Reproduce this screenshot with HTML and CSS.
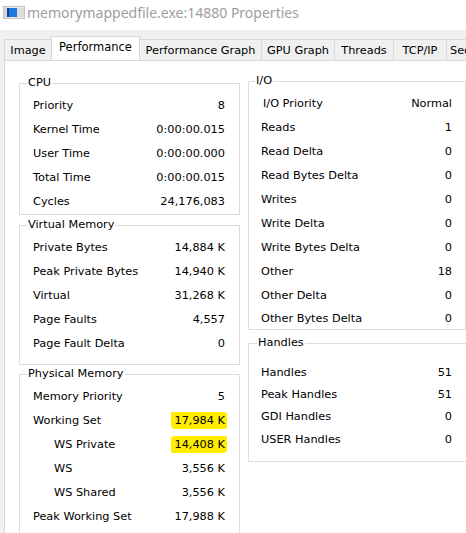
FILE: index.html
```html
<!DOCTYPE html>
<html>
<head>
<meta charset="utf-8">
<title>memorymappedfile.exe:14880 Properties</title>
<link rel="stylesheet" href="styles.css">
</head>
<body>
<div class="window">
  <div class="titlebar">
    <svg class="app-icon" width="22" height="13" viewBox="0 0 22 13">
      <rect x="0.5" y="0.5" width="21" height="12" fill="#ececec" stroke="#c4c4c4"/>
      <rect x="1" y="1" width="3" height="11" fill="#d6d6d6"/>
      <rect x="4" y="2" width="2" height="9" fill="#1b3d8f"/>
      <rect x="6" y="2" width="8" height="9" fill="#1e78e0"/>
      <rect x="14" y="2" width="7" height="9" fill="#dcdcdc"/>
    </svg>
    <span class="title">memorymappedfile.exe:14880 Properties</span>
  </div>

  <div class="tabs">
    <div class="tab t-image">Image</div>
    <div class="tab tab-active t-perf">Performance</div>
    <div class="tab t-graph">Performance Graph</div>
    <div class="tab t-gpu">GPU Graph</div>
    <div class="tab t-threads">Threads</div>
    <div class="tab t-tcp">TCP/IP</div>
    <div class="tab t-sec">Security</div>
  </div>

  <div class="panel">
    <div class="col col-left">
      <div class="group g-cpu">
        <div class="legend">CPU</div>
        <div class="row"><span>Priority</span><span>8</span></div>
        <div class="row"><span>Kernel Time</span><span>0:00:00.015</span></div>
        <div class="row"><span>User Time</span><span>0:00:00.000</span></div>
        <div class="row"><span>Total Time</span><span>0:00:00.015</span></div>
        <div class="row"><span>Cycles</span><span>24,176,083</span></div>
      </div>

      <div class="group g-vm">
        <div class="legend">Virtual Memory</div>
        <div class="row"><span>Private Bytes</span><span>14,884 K</span></div>
        <div class="row"><span>Peak Private Bytes</span><span>14,940 K</span></div>
        <div class="row"><span>Virtual</span><span>31,268 K</span></div>
        <div class="row"><span>Page Faults</span><span>4,557</span></div>
        <div class="row"><span>Page Fault Delta</span><span>0</span></div>
      </div>

      <div class="group g-pm">
        <div class="legend">Physical Memory</div>
        <div class="row"><span>Memory Priority</span><span>5</span></div>
        <div class="row"><span>Working Set</span><span class="hl">17,984 K</span></div>
        <div class="row indent"><span>WS Private</span><span class="hl hl2">14,408 K</span></div>
        <div class="row indent"><span>WS</span><span>3,556 K</span></div>
        <div class="row indent"><span>WS Shared</span><span>3,556 K</span></div>
        <div class="row"><span>Peak Working Set</span><span>17,988 K</span></div>
      </div>
    </div>

    <div class="col col-right">
      <div class="group g-io">
        <div class="legend">I/O</div>
        <div class="row"><span class="io-pri">I/O Priority</span><span>Normal</span></div>
        <div class="row"><span>Reads</span><span>1</span></div>
        <div class="row"><span>Read Delta</span><span>0</span></div>
        <div class="row"><span>Read Bytes Delta</span><span>0</span></div>
        <div class="row"><span>Writes</span><span>0</span></div>
        <div class="row"><span>Write Delta</span><span>0</span></div>
        <div class="row"><span>Write Bytes Delta</span><span>0</span></div>
        <div class="row"><span>Other</span><span>18</span></div>
        <div class="row"><span>Other Delta</span><span>0</span></div>
        <div class="row row-short"><span>Other Bytes Delta</span><span>0</span></div>
      </div>

      <div class="group g-handles">
        <div class="legend">Handles</div>
        <div class="row row-short"><span>Handles</span><span>51</span></div>
        <div class="row row-short"><span>Peak Handles</span><span>51</span></div>
        <div class="row row-short"><span>GDI Handles</span><span>0</span></div>
        <div class="row"><span>USER Handles</span><span>0</span></div>
      </div>
    </div>
  </div>
</div>
</body>
</html>
```

FILE: styles.css
```css
html, body {
  margin: 0;
  padding: 0;
}

body {
  width: 466px;
  height: 533px;
  overflow: hidden;
  background: #f0f0f0;
  font-family: "DejaVu Sans", "Liberation Sans", sans-serif;
  font-size: 11.3px;
  color: #000;
}

.window {
  width: 466px;
  height: 533px;
  overflow: hidden;
}

.titlebar {
  height: 30px;
  background: #fff;
  display: flex;
  align-items: center;
  padding-left: 3px;
  box-sizing: border-box;
}

.app-icon {
  flex: none;
  margin-top: -5px;
}

.title {
  margin-left: 2px;
  margin-top: -5px;
  font-family: "Noto Sans", "Open Sans", sans-serif;
  font-size: 14px;
  color: #9d9d9d;
  white-space: nowrap;
}

/* Tabs */
.tabs {
  display: flex;
  align-items: flex-end;
  height: 24px;
  margin-top: 6px;
  padding-left: 4px;
  white-space: nowrap;
  overflow: hidden;
}

.tab {
  flex: none;
  box-sizing: border-box;
  height: 21px;
  border: 1px solid #d9d9d9;
  border-bottom: none;
  margin-left: -1px;
  background: #f0f0f0;
  display: flex;
  align-items: center;
  justify-content: center;
  line-height: 1;
  padding-top: 1px;
}

.tab:first-child {
  margin-left: 0;
}

.tab-active {
  position: relative;
  z-index: 1;
  height: 25px;
  margin-bottom: -1px;
  background: #fff;
  padding-bottom: 4px;
  font-size: 11.5px;
}

.t-image { width: 48px; }
.t-perf { width: 89px; }
.t-graph { width: 123px; }
.t-gpu { width: 74px; }
.t-threads { width: 60px; }
.t-tcp { width: 54px; }
.t-sec { width: 70px; justify-content: flex-start; padding-left: 3px; }

/* Panel */
.panel {
  background: #fff;
  border-top: 1px solid #d9d9d9;
  border-left: 1px solid #d9d9d9;
  margin-left: 4px;
  height: 600px;
  display: flex;
  gap: 8px;
  padding-left: 14px;
}

.col {
  display: flex;
  flex-direction: column;
  flex: none;
}

.col-left {
  width: 221px;
  padding-top: 22px;
}

.col-right {
  width: 218px;
  padding-top: 20px;
}

.group {
  border: 1px solid #dcdcdc;
  background: #fff;
}

.legend {
  width: fit-content;
  height: 16px;
  line-height: 16px;
  margin: -9px 0 2px -6px;
  padding: 0 1px;
  background: #fff;
}

.g-cpu { padding: 0 14px 1px 13px; }
.g-vm { margin-top: 10px; padding: 0 14px 9px 13px; }
.g-pm { margin-top: 9px; padding: 0 14px 20px 13px; }

.g-io { padding: 0 13px 0 12px; }
.g-io .legend { margin-left: -6px; }

.g-handles {
  margin-top: 13px;
  margin-right: -6px;
  padding: 0 19px 10px 12px;
}
.g-handles .legend { margin: -9px 0 10px -4px; }

.row {
  height: 24px;
  display: flex;
  align-items: center;
  justify-content: space-between;
  white-space: nowrap;
}

.row-short {
  height: 22px;
}

.indent {
  padding-left: 21px;
}

.io-pri {
  margin-left: 2px;
}

.hl {
  background: #ffec00;
  padding: 2px 2px 2px 3px;
  margin-right: -2px;
  border-radius: 2px 3px 2px 4px;
}

.hl2 {
  border-radius: 3px 2px 4px 2px;
}
```
